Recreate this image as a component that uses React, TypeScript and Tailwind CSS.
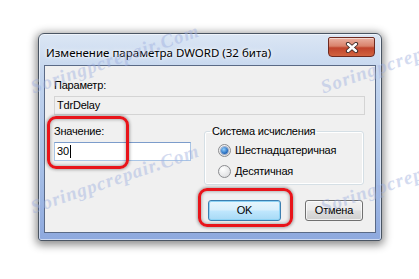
import React from 'react'

const WATERMARKS = [
  { left: 'left-[19px]', top: 'top-[46px]' },
  { left: 'left-[19px]', top: 'top-[166px]' },
  { left: 'left-[309px]', top: 'top-[46px]' },
  { left: 'left-[309px]', top: 'top-[166px]' },
]

function Radio({ checked, label }: { checked?: boolean; label: string }) {
  return (
    <div className="flex h-[15px] items-center gap-[4px]">
      <span className="flex h-[13px] w-[13px] items-center justify-center rounded-full border border-[#8b8c8f] bg-[radial-gradient(circle_at_35%_30%,#ffffff,#d6d7d9)]">
        {checked && (
          <span className="h-[7px] w-[7px] rounded-full bg-[radial-gradient(circle_at_40%_35%,#8fd0ff,#1f64b8_70%)] shadow-[0_0_0_1px_rgba(30,70,140,0.4)]" />
        )}
      </span>
      <span>{label}</span>
    </div>
  )
}

// Red annotation ring drawn over the dialog controls
function Ring({ className }: { className: string }) {
  return (
    <span
      className={`pointer-events-none absolute rounded-[9px] border-[3px] border-[#e8141a] shadow-[0_0_3px_1px_rgba(0,0,0,0.3),inset_0_0_3px_1px_rgba(0,0,0,0.25)] ${className}`}
    />
  )
}

export default function App() {
  return (
    <div className="relative h-[279px] w-[419px] overflow-hidden bg-white text-[11px] leading-[15px] tracking-[-0.2px] text-black [font-family:'Liberation_Sans','Noto_Sans',sans-serif]">
      <div className="pl-[38px] pt-[33px]">
        {/* window frame */}
        <div className="flex h-[208px] w-[344px] flex-col rounded-t-[6px] rounded-b-[3px] border border-[#4a5563] bg-[linear-gradient(180deg,#dbe6f4_0%,#c3d5ee_20%,#abc3e8_60%,#8ea9de_100%)] px-[5px] pb-[7px] shadow-[0_2px_9px_2px_rgba(0,0,0,0.45),inset_0_0_0_1px_rgba(255,255,255,0.55)]">
          {/* title bar */}
          <div className="relative flex h-[31px] items-start">
            <span className="pl-[2px] pt-[11px] text-[11.5px] tracking-normal [font-family:'Noto_Sans',sans-serif] [text-shadow:0_0_6px_#ffffff,0_0_3px_#ffffff]">
              Изменение параметра DWORD (32 бита)
            </span>
            <button className="absolute right-[1px] top-[3px] flex h-[20px] w-[47px] items-center justify-center rounded-b-[4px] rounded-t-[2px] border border-[#6e2a20] bg-[linear-gradient(180deg,#eab1a2_0%,#d9826b_45%,#c0442c_55%,#d2633f_100%)] shadow-[inset_0_1px_0_rgba(255,255,255,0.5)]">
              <svg width="14" height="11" viewBox="0 0 14 11">
                <path d="M3 2 L11 9 M11 2 L3 9" stroke="#3a2a28" strokeWidth="4.2" strokeLinecap="round" />
                <path d="M3 2 L11 9 M11 2 L3 9" stroke="#ffffff" strokeWidth="2.4" strokeLinecap="round" />
              </svg>
            </button>
          </div>

          {/* client area */}
          <div className="h-[168px] border border-[#5a6a86] bg-[#f0f0f0] px-[9px] pt-[12px]">
            <div>Параметр:</div>
            <div className="mt-[3px] flex h-[19px] w-[311px] items-center border border-[#d4d4d4] bg-[#f0f0f0] px-[2px]">
              TdrDelay
            </div>

            <div className="mt-[9px] flex items-start">
              <div className="relative w-[137px]">
                <div>Значение:</div>
                <div className="mt-[3px] flex h-[19px] items-center border border-[#a9c5e6] border-t-[#7c9ccb] bg-white px-[2px]">
                  <span>30</span>
                  <span className="ml-[1px] h-[13px] w-[1px] bg-black" />
                </div>
                <Ring className="-left-[7px] -top-[8px] -bottom-[8px] right-[62px]" />
              </div>

              <fieldset className="ml-[13px] w-[160px] rounded-[3px] border border-[#d5dfe5] pb-[5px] shadow-[inset_0_0_0_1px_#ffffff]">
                <legend className="ml-[5px] px-[2px]">Система исчисления</legend>
                <div className="mt-[4px] flex flex-col gap-[6px] pl-[13px]">
                  <Radio checked label="Шестнадцатеричная" />
                  <Radio label="Десятичная" />
                </div>
              </fieldset>
            </div>

            <div className="mt-[15px] flex justify-end gap-[24px] pr-[3px]">
              <div className="relative">
                <button className="flex h-[21px] w-[73px] items-center justify-center rounded-[3px] border border-[#3c7fb1] bg-[linear-gradient(180deg,#e8f6fd_0%,#d8effc_45%,#bee6fd_55%,#a7d9f5_100%)] shadow-[inset_0_0_0_1px_#8ed3f5]">
                  OK
                </button>
                <Ring className="-left-[10px] -right-[12px] -top-[12px] -bottom-[6px]" />
              </div>
              <button className="flex h-[21px] w-[58px] items-center justify-center rounded-[3px] border border-[#707070] bg-[linear-gradient(180deg,#f2f2f2_0%,#ebebeb_45%,#dddddd_55%,#cfcfcf_100%)] shadow-[inset_0_0_0_1px_rgba(255,255,255,0.7)]">
                Отмена
              </button>
            </div>
          </div>
        </div>
      </div>

      {/* site watermark */}
      {WATERMARKS.map((w, i) => (
        <span
          key={i}
          className={`pointer-events-none absolute ${w.left} ${w.top} w-[192px] -rotate-[19deg] whitespace-nowrap text-center text-[19px] font-bold italic leading-[26px] tracking-[1px] text-[#9fb0e0] opacity-45 [font-family:'Liberation_Serif',serif]`}
        >
          Soringpcrepair.Com
        </span>
      ))}
    </div>
  )
}
